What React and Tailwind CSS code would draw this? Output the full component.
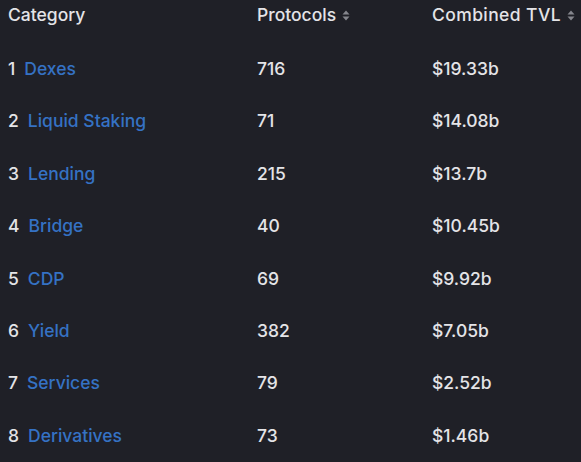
import React from 'react';

const rows = [
  { name: 'Dexes', protocols: 716, tvl: '$19.33b' },
  { name: 'Liquid Staking', protocols: 71, tvl: '$14.08b' },
  { name: 'Lending', protocols: 215, tvl: '$13.7b' },
  { name: 'Bridge', protocols: 40, tvl: '$10.45b' },
  { name: 'CDP', protocols: 69, tvl: '$9.92b' },
  { name: 'Yield', protocols: 382, tvl: '$7.05b' },
  { name: 'Services', protocols: 79, tvl: '$2.52b' },
  { name: 'Derivatives', protocols: 73, tvl: '$1.46b' },
];

function SortIcon() {
  return (
    <svg width="8" height="11" viewBox="0 0 8 11" className="ml-[6px] mt-[1px]">
      <path d="M4 0.5 L7.5 4.5 H0.5 Z" fill="#85868d" />
      <path d="M4 10.5 L7.5 6.5 H0.5 Z" fill="#85868d" />
    </svg>
  );
}

const App = () => {
  return (
    <div className="w-[581px] h-[462px] bg-[#1f2027] text-[#e4e4e7] text-[17.5px] font-medium overflow-hidden" style={{ fontFamily: 'Inter, "Liberation Sans", sans-serif' }}>
      <div className="grid grid-cols-[249px_175px_1fr] h-[43px] pl-2 pt-[3px]">
        <div className="h-6 flex items-center">Category</div>
        <div className="flex items-center h-6">Protocols<SortIcon /></div>
        <div className="flex items-center h-6 tracking-[0.4px]">Combined TVL<SortIcon /></div>
      </div>
      {rows.map((r, i) => (
        <div key={r.name} className="grid grid-cols-[249px_175px_1fr] h-[52.4px] pl-2 items-center">
          <div className="flex gap-[9px]">
            <span>{i + 1}</span>
            <span className="text-[#3572c4]">{r.name}</span>
          </div>
          <div>{r.protocols}</div>
          <div>{r.tvl}</div>
        </div>
      ))}
    </div>
  );
};

export default App;
